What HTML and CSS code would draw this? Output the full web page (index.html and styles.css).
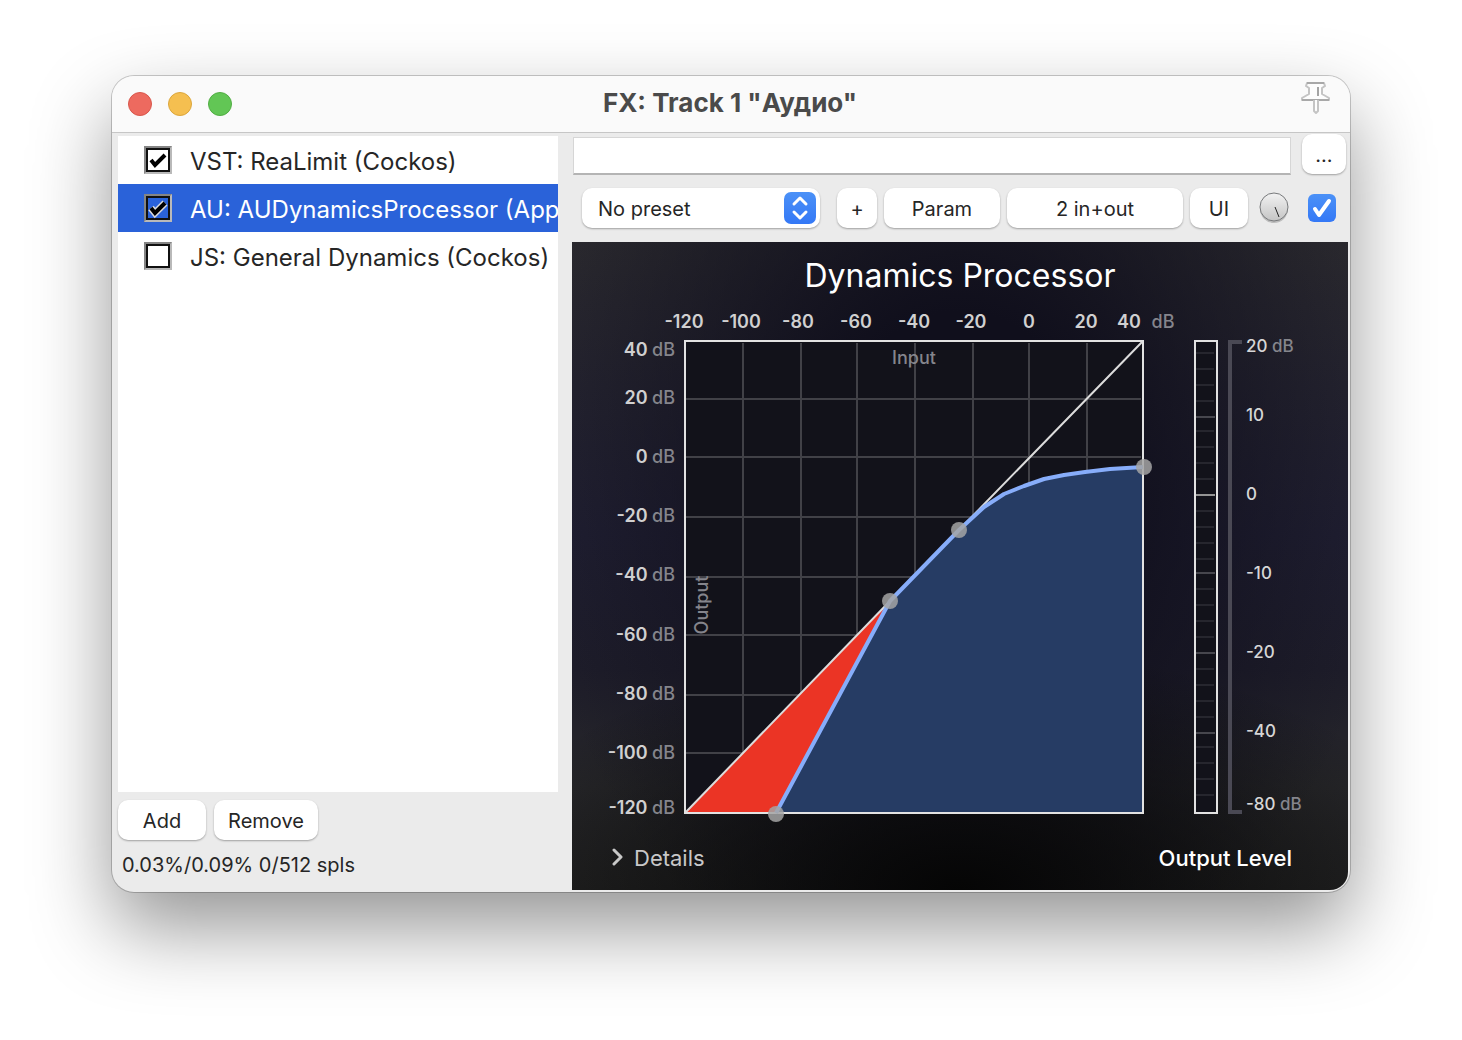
FILE: index.html
```html
<!DOCTYPE html>
<html lang="en">
<head>
<meta charset="utf-8">
<title>FX: Track 1 "Аудио"</title>
<link rel="stylesheet" href="styles.css">
</head>
<body>
<main class="window">
  <header class="titlebar">
    <div class="lights">
      <button class="light light-close" aria-label="Close"></button>
      <button class="light light-min" aria-label="Minimize"></button>
      <button class="light light-zoom" aria-label="Zoom"></button>
    </div>
    <h1 class="title">FX: Track 1 "Аудио"</h1>
    <button class="pin" aria-label="Pin window">
      <svg width="32" height="34" viewBox="0 0 32 34" fill="#fdfdfd" stroke="#c4c4c4" stroke-width="2" stroke-linejoin="round">
        <path d="M7 2h17l1 3-3 2v6l7 4v2H2v-2l7-4V7L6 5z"/>
        <path d="M2 19h27M7 2h17" stroke="#a8a8a8"/>
        <path d="M14 19v11l2 2 2-2V19"/>
        <path d="M18 6v9" stroke="#a4a4a4"/>
      </svg>
    </button>
  </header>

  <div class="content">
    <section class="chain">
      <ul class="fx-list">
        <li class="fx">
          <label class="fx-label"><input class="fx-check" type="checkbox" checked><svg class="fx-tick" viewBox="0 0 28 28"><path d="M7 14l4 5L21 9"/></svg><span>VST: ReaLimit (Cockos)</span></label>
        </li>
        <li class="fx fx-selected">
          <label class="fx-label"><input class="fx-check" type="checkbox" checked><svg class="fx-tick" viewBox="0 0 28 28"><path class="tick-halo" d="M7 14l4 5L21 9"/><path d="M7 14l4 5L21 9"/></svg><span>AU: AUDynamicsProcessor (Apple)</span></label>
        </li>
        <li class="fx">
          <label class="fx-label"><input class="fx-check" type="checkbox"><span>JS: General Dynamics (Cockos)</span></label>
        </li>
      </ul>
      <div class="chain-actions">
        <button class="btn btn-add">Add</button>
        <button class="btn btn-remove">Remove</button>
      </div>
      <p class="status">0.03%/0.09% 0/512 spls</p>
    </section>

    <section class="editor">
      <div class="comment-row">
        <input class="comment" type="text" aria-label="Comment">
        <button class="btn btn-more">...</button>
      </div>
      <div class="toolbar">
        <div class="preset">
          <select class="preset-select" aria-label="Preset"><option>No preset</option></select>
          <svg class="preset-arrows" width="32" height="32" viewBox="0 0 32 32" fill="none" stroke="#fff" stroke-width="3" stroke-linecap="round" stroke-linejoin="round">
            <path d="M10 12l6-6 6 6M10 20l6 6 6-6"/>
          </svg>
        </div>
        <button class="btn btn-plus">+</button>
        <button class="btn btn-param">Param</button>
        <button class="btn btn-io">2 in+out</button>
        <button class="btn btn-ui">UI</button>
        <svg class="knob" width="30" height="32" viewBox="0 0 30 32" role="img" aria-label="Wet mix">
          <defs><linearGradient id="knobFill" x1="0" y1="0" x2="0" y2="1"><stop offset="0" stop-color="#f2f2f2"/><stop offset="1" stop-color="#c4c4c4"/></linearGradient></defs>
          <circle cx="15" cy="17" r="14" fill="#bdbdbd"/>
          <circle cx="15" cy="15" r="14" fill="url(#knobFill)" stroke="#77797b" stroke-width="1"/>
          <path d="M16 15l4 10" stroke="#222" stroke-width="1"/>
        </svg>
        <label class="bypass">
          <input class="bypass-check" type="checkbox" checked aria-label="Enabled">
          <svg class="bypass-tick" viewBox="0 0 28 28" fill="none" stroke="#fff" stroke-width="4" stroke-linecap="round" stroke-linejoin="round"><path d="M7 15l4 6L21 7"/></svg>
        </label>
      </div>

      <div class="plugin">
        <h2 class="plugin-title">Dynamics Processor</h2>
        <svg class="graph" viewBox="0 0 776 530" role="img" aria-label="Transfer curve and output meter">
          <g class="axis" text-anchor="middle">
            <text x="112" y="28">-120</text>
            <text x="169" y="28">-100</text>
            <text x="226" y="28">-80</text>
            <text x="284" y="28">-60</text>
            <text x="342" y="28">-40</text>
            <text x="399" y="28">-20</text>
            <text x="457" y="28">0</text>
            <text x="514" y="28">20</text>
            <text x="557" y="28">40</text>
            <text x="591" y="28" class="unit">dB</text>
          </g>
          <g class="axis" text-anchor="end">
            <text x="103" y="56">40 <tspan class="unit">dB</tspan></text>
            <text x="103" y="104">20 <tspan class="unit">dB</tspan></text>
            <text x="103" y="163">0 <tspan class="unit">dB</tspan></text>
            <text x="103" y="222">-20 <tspan class="unit">dB</tspan></text>
            <text x="103" y="281">-40 <tspan class="unit">dB</tspan></text>
            <text x="103" y="341">-60 <tspan class="unit">dB</tspan></text>
            <text x="103" y="400">-80 <tspan class="unit">dB</tspan></text>
            <text x="103" y="459">-100 <tspan class="unit">dB</tspan></text>
            <text x="103" y="514">-120 <tspan class="unit">dB</tspan></text>
          </g>

          <rect x="113" y="41" width="458" height="472" fill="#12121a"/>
          <path class="grid" d="M114 99H569M114 157H569M114 217H569M114 277H569M114 335H569M114 395H569M114 453H569"/>
          <path class="grid" d="M171 43V512M229 43V512M285 43V512M343 43V512M401 43V512M457 43V512M515 43V512"/>
          <g class="axis">
            <text x="342" y="64" text-anchor="middle" class="caption">Input</text>
            <text transform="translate(136 305) rotate(-90)" text-anchor="middle" class="caption">Output</text>
          </g>
          <path d="M113 513L318 301L204 513Z" fill="#eb3425"/>
          <path d="M204 513L318 301L387 230L412 207L432 194L452 186L472 179L492 175L513 172L538 169L571 167V513Z" fill="#263c64"/>
          <path d="M113 513L318 301L387 230L571 41" fill="none" stroke="#dcdcdc" stroke-width="2"/>
          <rect x="113" y="41" width="458" height="472" fill="none" stroke="#e2e2e2" stroke-width="2"/>
          <path d="M204 513L318 301L387 230L412 207L432 194L452 186L472 179L492 175L513 172L538 169L571 167" fill="none" stroke="#87adfa" stroke-width="4" stroke-linejoin="round"/>
          <g fill="#a5a5a5" fill-opacity="0.85">
            <circle cx="204" cy="514" r="8"/>
            <circle cx="318" cy="301" r="8"/>
            <circle cx="387" cy="230" r="8"/>
            <circle cx="572" cy="167" r="8"/>
          </g>

          <rect x="623" y="41" width="22" height="472" fill="#12121a" stroke="#e2e2e2" stroke-width="2"/>
          <path stroke="#26262e" stroke-width="2" d="M624 53h18M624 69h18M624 85h18M624 101h18M624 131h18M624 147h18M624 163h18M624 179h18M624 211h18M624 227h18M624 243h18M624 259h18M624 289h18M624 305h18M624 321h18M624 337h18M624 369h18M624 385h18M624 401h18M624 417h18M624 447h18M624 463h18M624 479h18M624 495h18"/>
          <path stroke="#46464d" stroke-width="2" d="M624 117h19M624 273h19M624 353h19M624 433h19"/>
          <path stroke="#949494" stroke-width="2" d="M624 195h19"/>
          <path d="M670 42H658V512H670" fill="none" stroke="#4a4954" stroke-width="4"/>
          <g class="scale">
            <text x="674" y="52">20 <tspan class="unit">dB</tspan></text>
            <text x="674" y="121">10</text>
            <text x="674" y="200">0</text>
            <text x="674" y="279">-10</text>
            <text x="674" y="358">-20</text>
            <text x="674" y="437">-40</text>
            <text x="674" y="510">-80 <tspan class="unit">dB</tspan></text>
          </g>
        </svg>
        <div class="plugin-footer">
          <button class="details">
            <svg width="12" height="20" viewBox="0 0 12 20" fill="none" stroke="#c8c8c8" stroke-width="3" stroke-linecap="round" stroke-linejoin="round"><path d="M2 2l7 7-7 7"/></svg>
            Details
          </button>
          <span class="output-level">Output Level</span>
        </div>
      </div>
    </section>
  </div>
</main>
</body>
</html>
```
FILE: styles.css
```css
* {
  box-sizing: border-box;
}

body {
  margin: 0;
  padding: 76px 112px 148px;
  background: #fff;
  color: #262626;
  font-family: Inter, "Liberation Sans", sans-serif;
  font-size: 20px;
}

button,
input,
select {
  margin: 0;
  font: inherit;
  color: inherit;
}

.window {
  display: flex;
  flex-direction: column;
  min-height: 816px;
  border-radius: 22px;
  background: #ebebeb;
  overflow: hidden;
  box-shadow: 0 0 0 1px rgba(0, 0, 0, 0.2), 0 36px 80px rgba(0, 0, 0, 0.42);
}

.titlebar {
  display: grid;
  grid-template-columns: 1fr auto 1fr;
  height: 57px;
  padding: 0 18px 0 16px;
  background: #fafafa;
  border-bottom: 1px solid #c6c6c6;
}

.lights {
  display: flex;
  align-items: center;
  gap: 16px;
}

.light {
  width: 24px;
  height: 24px;
  padding: 0;
  border: 1px solid;
  border-radius: 50%;
}

.light-close {
  background: #ed6a5f;
  border-color: #d8574c;
}

.light-min {
  background: #f5bf50;
  border-color: #dba63c;
}

.light-zoom {
  background: #62c655;
  border-color: #51ad43;
}

.title {
  margin: 0;
  font-size: 26px;
  font-weight: 700;
  line-height: 54px;
  color: #4a4a4a;
}

.pin {
  justify-self: end;
  align-self: start;
  height: 34px;
  margin-top: 5px;
  padding: 0;
  border: 0;
  background: none;
}

.content {
  flex: 1;
  display: grid;
  grid-template-columns: 440px minmax(0, 1fr);
  gap: 14px;
  padding: 1px 2px 2px 6px;
}

.chain {
  display: flex;
  flex-direction: column;
  padding-top: 2px;
}

.fx-list {
  flex: 1;
  margin: 0;
  padding: 0;
  list-style: none;
  background: #fff;
  overflow: hidden;
}

.fx {
  height: 48px;
  padding-left: 26px;
  font-size: 24px;
  line-height: 52px;
  white-space: nowrap;
}

.fx-selected {
  background: #2a62d9;
  color: #fff;
}

.fx-label {
  position: relative;
  display: flex;
  gap: 18px;
}

.fx-check {
  appearance: none;
  flex: none;
  width: 28px;
  height: 28px;
  margin-top: 10px;
  border: 2px solid;
  border-color: #858585 #b9b9b9 #b9b9b9 #858585;
  box-shadow: inset 0 0 0 2px #101010;
}

.fx-tick {
  position: absolute;
  left: 0;
  top: 10px;
  width: 28px;
  height: 28px;
  fill: none;
  stroke: #000;
  stroke-width: 4;
}

.fx-tick .tick-halo {
  stroke: #dcdcdc;
  stroke-width: 7;
}

.chain-actions {
  display: flex;
  gap: 8px;
  padding-top: 8px;
}

.btn {
  height: 40px;
  padding: 2px 0 0;
  border: 0;
  border-radius: 10px;
  background: #fff;
  box-shadow: 0 1px 2px rgba(0, 0, 0, 0.32);
  line-height: 38px;
  text-align: center;
}

.btn-add {
  width: 88px;
}

.btn-remove {
  width: 104px;
}

.status {
  margin: 0;
  padding: 10px 4px;
  line-height: 30px;
}

.editor {
  display: flex;
  flex-direction: column;
}

.comment-row {
  display: flex;
  gap: 11px;
  padding: 0 2px 0 1px;
}

.comment {
  flex: 1;
  min-width: 0;
  height: 38px;
  margin-top: 3px;
  border: 1px solid #d6d6d6;
  border-bottom: 2px solid #b4b4b4;
  background: #fff;
}

.btn-more {
  width: 44px;
}

.toolbar {
  display: flex;
  align-items: center;
  gap: 7px;
  padding: 13px 12px 14px 10px;
}

.preset {
  position: relative;
  flex: 1;
  margin-right: 10px;
}

.preset-select {
  appearance: none;
  display: block;
  width: 100%;
  height: 40px;
  padding: 2px 48px 0 16px;
  border: 0;
  border-radius: 10px;
  background: #fff;
  box-shadow: 0 1px 2px rgba(0, 0, 0, 0.32);
}

.preset-arrows {
  position: absolute;
  right: 4px;
  top: 4px;
  border-radius: 7px;
  background: linear-gradient(#4b91f7, #3478f6);
}

.btn-plus {
  width: 40px;
}

.btn-param {
  width: 116px;
}

.btn-io {
  width: 176px;
}

.btn-ui {
  width: 58px;
}

.knob {
  margin: 0 12px 0 4px;
}

.bypass {
  position: relative;
  height: 28px;
}

.bypass-check {
  appearance: none;
  display: block;
  width: 28px;
  height: 28px;
  border-radius: 6px;
  background: linear-gradient(#4b91f7, #3478f6);
}

.bypass-tick {
  position: absolute;
  inset: 0;
}

.plugin {
  flex: 1;
  border-radius: 0 0 18px 0;
  background:
    radial-gradient(ellipse 64% 38% at 50% 100%, #050505 0%, rgba(5, 5, 5, 0) 100%),
    radial-gradient(ellipse 56% 84% at 50% 36%, #100f1c 30%, rgba(16, 15, 28, 0) 100%),
    linear-gradient(#2a292e 0%, #201f32 45%, #1e1d2a 66%, #27272a 84%, #222 100%);
  color: #fff;
}

.plugin-title {
  margin: 0;
  padding-top: 9px;
  font-size: 32px;
  font-weight: 400;
  line-height: 49px;
  text-align: center;
}

.graph {
  display: block;
  width: 100%;
}

.axis {
  font-size: 18px;
  font-weight: 600;
  fill: #d0d0d0;
}

.scale {
  font-size: 17px;
  font-weight: 500;
  fill: #d6d6d6;
}

.unit,
.caption {
  font-weight: 500;
  fill: #85858c;
}

.grid {
  stroke: #414147;
  stroke-width: 2;
}

.plugin-footer {
  display: flex;
  justify-content: space-between;
  padding: 12px 56px 16px 40px;
  font-size: 22px;
  line-height: 32px;
}

.details {
  display: flex;
  align-items: center;
  gap: 10px;
  padding: 0;
  border: 0;
  background: none;
  color: #c8c8c8;
}

.output-level {
  font-weight: 500;
}
```
